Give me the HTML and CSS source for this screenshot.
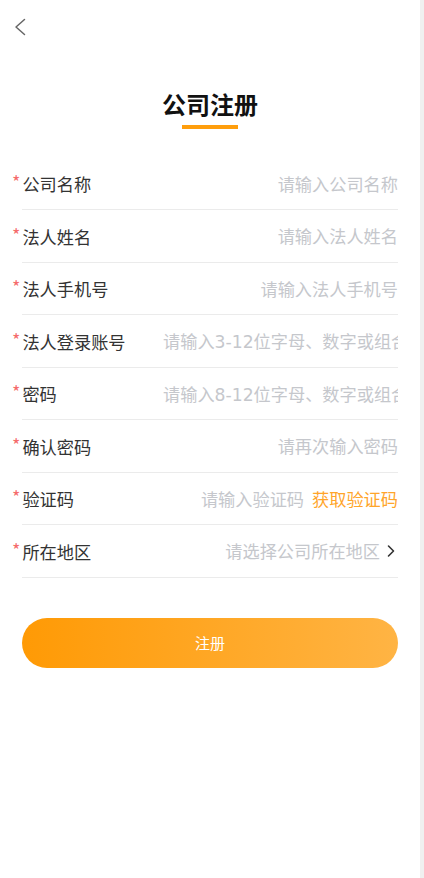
FILE: index.html
```html
<!DOCTYPE html>
<html>
<head>
    <meta charset="UTF-8">
    <title>公司注册</title>
    <link rel="stylesheet" href="styles.css">
</head>
<body>
    <div id="page">
        <div class="topbar">
            <svg class="backIcon" width="12" height="18" viewBox="0 0 12 18">
                <path d="M10.5 1.5 L2 9 L10.5 16.5" fill="none" stroke="#666" stroke-width="1.5" stroke-linecap="round" stroke-linejoin="round"/>
            </svg>
        </div>
        <div class="titleArea">
            <h1 class="pageTitle">公司注册</h1>
            <div class="titleLine"></div>
        </div>
        <div class="regForm">
            <div class="formRow">
                <div class="rowLabel"><span class="req">*</span>公司名称</div>
                <div class="rowInput">请输入公司名称</div>
            </div>
            <div class="formRow">
                <div class="rowLabel"><span class="req">*</span>法人姓名</div>
                <div class="rowInput">请输入法人姓名</div>
            </div>
            <div class="formRow">
                <div class="rowLabel"><span class="req">*</span>法人手机号</div>
                <div class="rowInput">请输入法人手机号</div>
            </div>
            <div class="formRow">
                <div class="rowLabel"><span class="req">*</span>法人登录账号</div>
                <div class="rowInput longText">请输入3-12位字母、数字或组合</div>
            </div>
            <div class="formRow">
                <div class="rowLabel"><span class="req">*</span>密码</div>
                <div class="rowInput longText">请输入8-12位字母、数字或组合</div>
            </div>
            <div class="formRow">
                <div class="rowLabel"><span class="req">*</span>确认密码</div>
                <div class="rowInput">请再次输入密码</div>
            </div>
            <div class="formRow">
                <div class="rowLabel"><span class="req">*</span>验证码</div>
                <div class="rowInput">请输入验证码</div>
                <div class="getCode">获取验证码</div>
            </div>
            <div class="formRow">
                <div class="rowLabel"><span class="req">*</span>所在地区</div>
                <div class="rowInput">请选择公司所在地区</div>
                <svg class="arrowIcon" width="10" height="14" viewBox="0 0 10 14">
                    <path d="M2.5 2 L7.5 7 L2.5 12" fill="none" stroke="#333" stroke-width="1.6" stroke-linecap="round" stroke-linejoin="round"/>
                </svg>
            </div>
        </div>
        <div class="submitBtn">注册</div>
    </div>
</body>
</html>
```

FILE: styles.css
```css
body {
    margin: 0;
    padding: 0;
    background-color: #f0f0f0;
    font-family: "Noto Sans CJK SC", "Noto Sans", sans-serif;
}

#page {
    width: 420px;
    height: 878px;
    background-color: #fff;
}

.topbar {
    height: 53px;
    display: flex;
    align-items: center;
    padding-left: 14px;
}

.titleArea {
    margin-top: 35px;
    display: flex;
    flex-direction: column;
    align-items: center;
}

.pageTitle {
    margin: 0;
    font-size: 24px;
    line-height: 32px;
    font-weight: bold;
    color: #111;
}

.titleLine {
    width: 56px;
    height: 4px;
    margin-top: 5px;
    background-color: #ff9e0d;
}

.regForm {
    margin-top: 28.5px;
    padding: 0 22px;
}

.formRow {
    height: 52.5px;
    box-sizing: border-box;
    border-bottom: 1px solid #ebebeb;
    display: flex;
    align-items: center;
}

.rowLabel {
    width: 141px;
    flex-shrink: 0;
    font-size: 17.2px;
    color: #333;
    white-space: nowrap;
}

.req {
    color: #f56c6c;
    margin-left: -10px;
    margin-right: 2px;
    font-size: 18px;
    position: relative;
    top: -2px;
}

.rowInput {
    flex: 1;
    font-family: "DejaVu Sans", "Noto Sans CJK SC", sans-serif;
    font-size: 17.2px;
    color: #c5c7cc;
    text-align: right;
    white-space: nowrap;
    overflow: hidden;
}

.longText {
    text-align: left;
}

.getCode {
    margin-left: 8px;
    font-size: 17.2px;
    color: #ffa52a;
    white-space: nowrap;
}

.arrowIcon {
    margin-left: 6px;
    margin-right: 2px;
}

.submitBtn {
    margin: 40px 22px 0;
    height: 50px;
    border-radius: 25px;
    background: linear-gradient(90deg, #ff9a05, #ffb444);
    color: #fff;
    font-size: 15px;
    line-height: 50px;
    text-align: center;
}
```
